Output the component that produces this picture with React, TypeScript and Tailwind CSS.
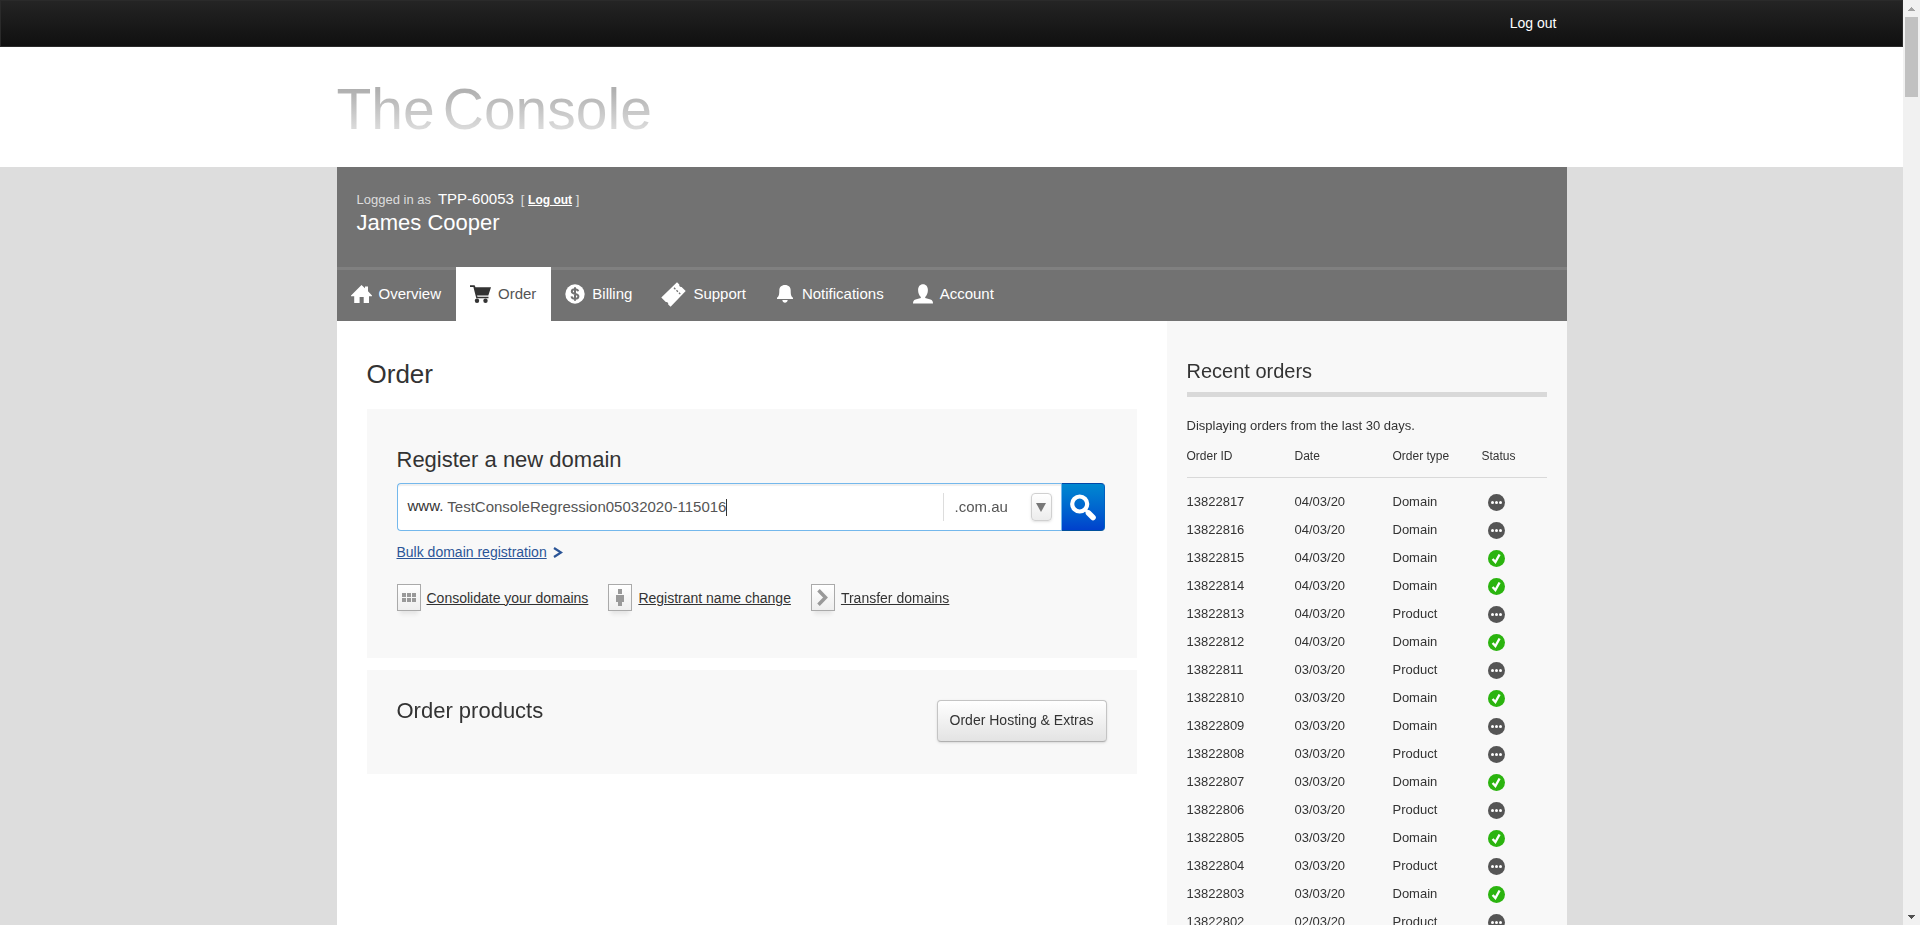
import React from "react";

type OrderRow = { id: string; date: string; type: "Domain" | "Product"; done: boolean };

const orders: OrderRow[] = [
  { id: "13822817", date: "04/03/20", type: "Domain", done: false },
  { id: "13822816", date: "04/03/20", type: "Domain", done: false },
  { id: "13822815", date: "04/03/20", type: "Domain", done: true },
  { id: "13822814", date: "04/03/20", type: "Domain", done: true },
  { id: "13822813", date: "04/03/20", type: "Product", done: false },
  { id: "13822812", date: "04/03/20", type: "Domain", done: true },
  { id: "13822811", date: "03/03/20", type: "Product", done: false },
  { id: "13822810", date: "03/03/20", type: "Domain", done: true },
  { id: "13822809", date: "03/03/20", type: "Domain", done: false },
  { id: "13822808", date: "03/03/20", type: "Product", done: false },
  { id: "13822807", date: "03/03/20", type: "Domain", done: true },
  { id: "13822806", date: "03/03/20", type: "Product", done: false },
  { id: "13822805", date: "03/03/20", type: "Domain", done: true },
  { id: "13822804", date: "03/03/20", type: "Product", done: false },
  { id: "13822803", date: "03/03/20", type: "Domain", done: true },
  { id: "13822802", date: "02/03/20", type: "Product", done: false },
];

const HomeIcon = () => (
  <svg width="21" height="18" viewBox="0 0 21 18" fill="currentColor" aria-hidden="true">
    <path d="M10.5 0 14 3.3V1.5h3v4.7l4 4.3v.8h-3V18h-5.3v-6H8.6v6H3.2v-6.7H0v-.8z" />
  </svg>
);

const CartIcon = () => (
  <svg width="21" height="18" viewBox="0 0 21 18" fill="currentColor" aria-hidden="true">
    <path d="M0 .3h4.6l.9 2H21l-2.700 8.200H7l.5 1.300h11v1.500H6.300L3.400 2H0z" />
    <circle cx="7" cy="15.800" r="2.200" />
    <circle cx="15.500" cy="15.800" r="2.200" />
  </svg>
);

const DollarIcon = () => (
  <svg width="20" height="20" viewBox="0 0 20 20" aria-hidden="true">
    <circle cx="10" cy="10" r="9.700" fill="currentColor" />
    <path
      d="M13.200 7.300C12.800 6 11.600 5.300 10 5.300c-1.900 0-3.200.9-3.200 2.300 0 3.300 6.600 1.400 6.600 4.700 0 1.500-1.400 2.500-3.400 2.500-1.800 0-3.200-.9-3.500-2.400M10 3.200v13.600"
      fill="none"
      stroke="#727272"
      strokeWidth="2"
    />
  </svg>
);

const TicketIcon = () => (
  <svg width="25" height="25" viewBox="0 0 25 25" aria-hidden="true">
    <path
      d="M16 .3l2.300 2.300c-.4 1.500.9 2.700 2.300 2.300l4.100 4.200L9.600 24.700l-2.400-2.300c.4-1.500-.9-2.800-2.400-2.400L.3 15.600z"
      fill="currentColor"
    />
    <path d="M13 5.800l6.300 6.300" stroke="#727272" strokeWidth="1.300" strokeDasharray="2 1.500" />
  </svg>
);

const BellIcon = () => (
  <svg width="16" height="18" viewBox="0 0 16 18" fill="currentColor" aria-hidden="true">
    <path d="M8 0c3.700 0 5.700 2.300 5.700 5.500 0 4.500.5 6 2.300 7.300V14H0v-1.200c1.800-1.300 2.300-2.800 2.300-7.300C2.300 2.300 4.300 0 8 0zM5.300 15h5.400c-.3 1.800-1.300 2.800-2.700 2.800S5.600 16.800 5.300 15z" />
  </svg>
);

const PersonIcon = () => (
  <svg width="20" height="20" viewBox="0 0 20 20" fill="currentColor" aria-hidden="true">
    <path d="M10 .2c3 0 4.900 2.300 4.900 5.800 0 3-1.100 5.700-2.700 6.900v1l5.300 1.600c1.800.6 2.500 1.900 2.500 4H0c0-2.100.7-3.400 2.500-4l5.300-1.600v-1C6.200 11.700 5.100 9 5.100 6 5.100 2.500 7 .2 10 .2z" />
  </svg>
);

const SearchIcon = () => (
  <svg width="26" height="27" viewBox="0 0 26 27" fill="none" stroke="#fff" aria-hidden="true">
    <circle cx="9.700" cy="10" r="7.500" strokeWidth="4.200" />
    <path d="M15.500 16l2.500 2.500" strokeWidth="3" />
    <path d="M18.500 19l4.500 4.500" strokeWidth="5.600" strokeLinecap="round" />
  </svg>
);

const StatusIcon = ({ done }: { done: boolean }) => (
  <svg
    className="block"
    width="17"
    height="17"
    viewBox="0 0 17 17"
    role="img"
    aria-label={done ? "Complete" : "Pending"}
  >
    <circle cx="8.500" cy="8.500" r="8.500" fill={done ? "#2bb40f" : "#555"} />
    {done ? (
      <path d="M4.600 9l2.800 3 4.200-7.500" fill="none" stroke="#fff" strokeWidth="2.400" />
    ) : (
      <g fill="#fff">
        <circle cx="4.500" cy="8.500" r="1.500" />
        <circle cx="8.500" cy="8.500" r="1.500" />
        <circle cx="12.500" cy="8.500" r="1.500" />
      </g>
    )}
  </svg>
);

const GridGlyph = () => (
  <svg width="14" height="9" viewBox="0 0 14 9" fill="#999" aria-hidden="true">
    <path d="M0 0h4v4H0zM5 0h4v4H5zM10 0h4v4h-4zM0 5h4v4H0zM5 5h4v4H5zM10 5h4v4h-4z" />
  </svg>
);

const FigureGlyph = () => (
  <svg width="8" height="17" viewBox="0 0 8 17" fill="#999" aria-hidden="true">
    <path d="M2 0h4v5H2zM0 6h8v7H6v4H2v-4H0z" />
  </svg>
);

const ArrowGlyph = () => (
  <svg width="11" height="17" viewBox="0 0 11 17" fill="none" stroke="#999" strokeWidth="3.500" aria-hidden="true">
    <path d="M1.500 1.300L8.500 8.500l-7 7.200" />
  </svg>
);

const tabs = [
  { label: "Overview", icon: <HomeIcon />, box: "w-[21px]" },
  { label: "Order", icon: <CartIcon />, box: "w-[21px]", active: true },
  { label: "Billing", icon: <DollarIcon />, box: "w-5" },
  { label: "Support", icon: <TicketIcon />, box: "w-[25px]" },
  { label: "Notifications", icon: <BellIcon />, box: "w-5" },
  { label: "Account", icon: <PersonIcon />, box: "w-5" },
];

const domainLinks = [
  { label: "Consolidate your domains", icon: <GridGlyph /> },
  { label: "Registrant name change", icon: <FigureGlyph /> },
  { label: "Transfer domains", icon: <ArrowGlyph /> },
];

function ScrollRail() {
  return (
    <div className="flex w-[17px] shrink-0 flex-col items-center bg-[#f1f1f1]" aria-hidden="true">
      <div className="flex h-[17px] items-center">
        <svg width="7" height="4" viewBox="0 0 7 4" fill="#a3a3a3">
          <path d="M3 0h1v1h1v1h1v1h1v1H0V3h1V2h1V1h1z" />
        </svg>
      </div>
      <div className="h-20 w-[13px] bg-[#c1c1c1]" />
      <div className="mt-auto flex h-[17px] items-center">
        <svg width="7" height="4" viewBox="0 0 7 4" fill="#505050">
          <path d="M0 0h7v1H6v1H5v1H4v1H3V3H2V2H1V1H0z" />
        </svg>
      </div>
    </div>
  );
}

function RegisterPanel() {
  return (
    <section className="bg-[#f8f8f8] px-[30px] pt-9 pb-[47px]">
      <h2 className="text-[22px] leading-[30px]">Register a new domain</h2>
      <form className="mt-2 mr-0.5 flex h-12" onSubmit={(e) => e.preventDefault()}>
        <div className="flex min-w-0 flex-1 items-center rounded-l-[4px] border border-r-0 border-[#74b8ec] bg-white pl-2.5 text-[15px] shadow-[inset_0_2px_1px_#f0f0f0]">
          <label htmlFor="domain" className="pb-0.5">
            www.
          </label>
          <div className="ml-1 flex min-w-0 flex-1 items-center">
            <input
              id="domain"
              type="text"
              autoFocus
              defaultValue="TestConsoleRegression05032020-115016"
              className="h-8 min-w-0 bg-transparent pb-0.5 text-[#555] caret-transparent outline-none [field-sizing:content]"
            />
            <span className="h-[17px] w-px bg-[#333]" />
          </div>
          <div className="relative flex h-7 w-[118px] items-center border-l border-[#ddd]">
            <select
              aria-label="Domain extension"
              className="h-7 w-full cursor-pointer appearance-none bg-transparent pl-[11px] text-[#555] outline-none"
            >
              <option>.com.au</option>
            </select>
            <span className="pointer-events-none absolute right-[9px] flex h-7 w-[21px] items-center justify-center rounded-[4px] border border-[#d0d0d0] bg-linear-to-b from-white to-[#ececec] shadow-sm">
              <svg width="10" height="9" viewBox="0 0 10 9" fill="#777" aria-hidden="true">
                <path d="M0 0h10L5 9z" />
              </svg>
            </span>
          </div>
        </div>
        <button
          type="submit"
          aria-label="Search"
          className="flex w-11 items-center justify-center rounded-r-[4px] border border-l-[#74b8ec] border-t-[#0047a8] border-r-[#0060c0] border-b-[#00509c] bg-linear-to-b from-[#0088d0] to-[#0040cc]"
        >
          <SearchIcon />
        </button>
      </form>
      <a href="#bulk" className="mt-[11px] flex w-fit items-center gap-1.5 text-sm text-[#2b5597]">
        <span className="underline">Bulk domain registration</span>
        <svg width="10" height="11" viewBox="0 0 10 11" fill="none" stroke="currentColor" strokeWidth="2.200" aria-hidden="true">
          <path d="M1 1l7 4.500L1 10" />
        </svg>
      </a>
      <ul className="mt-[22px] flex flex-wrap gap-5">
        {domainLinks.map((link) => (
          <li key={link.label}>
            <a href="#domains" className="flex items-center gap-1.5 text-sm underline">
              <span className="flex h-[27px] w-6 items-center justify-center border border-[#aaa] bg-linear-to-b from-white to-[#eee] shadow-[0_6px_4px_-3px_#e4e4e4]">
                {link.icon}
              </span>
              {link.label}
            </a>
          </li>
        ))}
      </ul>
    </section>
  );
}

function RecentOrders() {
  return (
    <aside className="w-[400px] shrink-0 bg-[#f8f8f8] px-5 pt-9">
      <h2 className="border-b-[5px] border-[#d9d9d9] pb-[7px] text-xl leading-7">Recent orders</h2>
      <p className="mt-[19px] text-[13px] leading-5">Displaying orders from the last 30 days.</p>
      <table className="mt-2.5 w-full table-fixed text-left text-[13px]">
        <thead>
          <tr className="border-b border-[#d9d9d9] text-xs">
            <th className="w-[108px] pb-[11px] leading-5 font-normal">Order ID</th>
            <th className="w-[98px] pb-[11px] leading-5 font-normal">Date</th>
            <th className="w-[89px] pb-[11px] leading-5 font-normal">Order type</th>
            <th className="pb-[11px] leading-5 font-normal">Status</th>
          </tr>
        </thead>
        <tbody className="before:block before:h-2.5 before:content-['']">
          {orders.map((o) => (
            <tr key={o.id} className="h-7">
              <td>{o.id}</td>
              <td>{o.date}</td>
              <td>{o.type}</td>
              <td className="pl-1.5">
                <StatusIcon done={o.done} />
              </td>
            </tr>
          ))}
        </tbody>
      </table>
    </aside>
  );
}

export default function App() {
  return (
    <div className="flex h-screen font-['Liberation_Sans',Arial,sans-serif] text-[#333]">
      <div className="flex min-w-0 flex-1 flex-col overflow-y-auto bg-[#ddd] [scrollbar-width:none]">
        <div className="h-[47px] shrink-0 border border-[#2a2a2a] bg-linear-to-b from-[#242424] to-[#101010]">
          <div className="mx-auto flex h-full max-w-[1230px] items-center justify-end pr-2.5 pb-0.5">
            <a href="#logout" className="text-sm text-white">
              Log out
            </a>
          </div>
        </div>
        <header className="shrink-0 bg-white">
          <div className="mx-auto flex h-[120px] max-w-[1230px] items-center pt-1">
            <h1 className="flex gap-2 bg-linear-to-b from-[#b0b0b0] from-20% to-[#dadada] to-80% bg-clip-text text-[57px] leading-[64px] text-transparent">
              <span>The</span>
              <span>Console</span>
            </h1>
          </div>
        </header>
        <div className="mx-auto flex w-full max-w-[1230px] flex-1 flex-col">
          <div className="h-[100px] bg-[#727272] px-5 pt-[21px] text-white">
            <p className="flex items-baseline text-[13px] leading-[22px] text-[#ddd]">
              Logged in as
              <span className="mx-[7px] text-[15px] text-white">TPP-60053</span>
              <span>
                [{" "}
                <a href="#logout" className="text-xs font-bold text-white underline">
                  Log out
                </a>{" "}
                ]
              </span>
            </p>
            <p className="text-[22px] leading-6">James Cooper</p>
          </div>
          <nav className="flex h-[54px] bg-[#727272] text-[15px] text-white shadow-[inset_0_3px_0_#808080]">
            {tabs.map((tab) => (
              <a
                key={tab.label}
                href="#tab"
                aria-current={tab.active ? "page" : undefined}
                className={
                  tab.active
                    ? "flex items-center gap-[7px] bg-white pr-[15px] pl-3.5 text-[#333]"
                    : "flex items-center gap-[7px] pr-[15px] pl-3.5"
                }
              >
                <span className={`flex justify-center ${tab.box}`}>{tab.icon}</span>
                <span className={tab.active ? "text-[#555]" : ""}>{tab.label}</span>
              </a>
            ))}
          </nav>
          <div className="flex flex-1 bg-white">
            <main className="min-w-0 flex-1 px-[30px] pt-9">
              <h1 className="text-[26px] leading-[34px]">Order</h1>
              <div className="mt-[18px] flex flex-col gap-3">
                <RegisterPanel />
                <section className="flex h-[104px] items-start justify-between bg-[#f8f8f8] px-[30px] pt-[30px]">
                  <h2 className="text-[22px] leading-[22px]">Order products</h2>
                  <button
                    type="button"
                    className="h-[42px] rounded-[4px] border border-[#c4c4c4] border-b-[#b0b0b0] bg-linear-to-b from-white to-[#e3e3e3] px-3 pb-0.5 text-sm shadow-sm"
                  >
                    Order Hosting &amp; Extras
                  </button>
                </section>
              </div>
            </main>
            <RecentOrders />
          </div>
        </div>
      </div>
      <ScrollRail />
    </div>
  );
}
